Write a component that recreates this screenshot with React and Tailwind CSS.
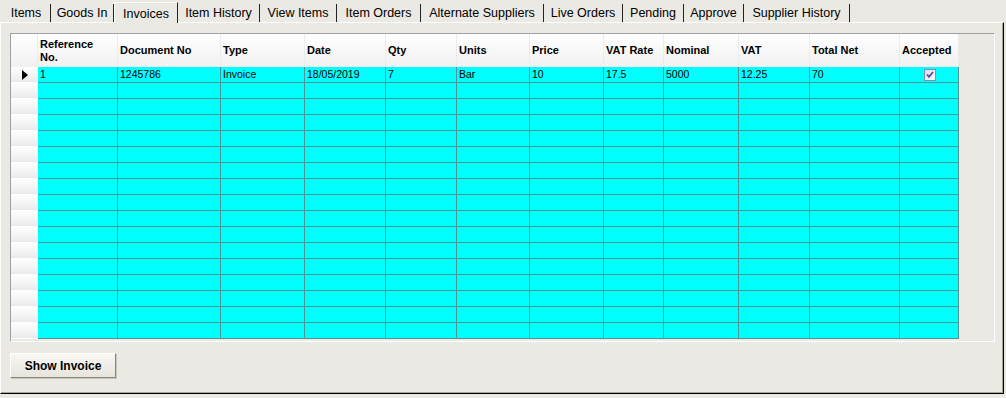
import React from 'react';

const tabs = [
    { label: 'Items', w: 'w-[49px]' },
    { label: 'Goods In', w: 'w-[63px]' },
    { label: 'Invoices', w: 'w-[64px]', active: true },
    { label: 'Item History', w: 'w-[82px]' },
    { label: 'View Items', w: 'w-[77px]' },
    { label: 'Item Orders', w: 'w-[84px]' },
    { label: 'Alternate Suppliers', w: 'w-[123px]' },
    { label: 'Live Orders', w: 'w-[79px]' },
    { label: 'Pending', w: 'w-[61px]' },
    { label: 'Approve', w: 'w-[60px]' },
    { label: 'Supplier History', w: 'w-[106px]' },
];

const columns = [
    { title: 'Reference No.', w: 'w-[80px]' },
    { title: 'Document No', w: 'w-[103px]' },
    { title: 'Type', w: 'w-[84px]' },
    { title: 'Date', w: 'w-[81px]' },
    { title: 'Qty', w: 'w-[71px]' },
    { title: 'Units', w: 'w-[73px]' },
    { title: 'Price', w: 'w-[74px]' },
    { title: 'VAT Rate', w: 'w-[60px]' },
    { title: 'Nominal', w: 'w-[75px]' },
    { title: 'VAT', w: 'w-[71px]' },
    { title: 'Total Net', w: 'w-[90px]' },
    { title: 'Accepted', w: 'w-[59px]' },
];

const firstRow = ['1', '1245786', 'Invoice', '18/05/2019', '7', 'Bar', '10', '17.5', '5000', '12.25', '70'];

const Checkbox = () => (
    <svg width="12" height="12" viewBox="0 0 12 12">
        <defs>
            <linearGradient id="cbg" x1="0" y1="0" x2="1" y2="1">
                <stop offset="0" stopColor="#d8d8e2" />
                <stop offset="1" stopColor="#ffffff" />
            </linearGradient>
        </defs>
        <rect x="0.5" y="0.5" width="11" height="11" fill="url(#cbg)" stroke="#7f8fb0" />
        <path d="M3 5.5 L5 7.8 L9 3" fill="none" stroke="#4b4fa6" strokeWidth="1.8" />
    </svg>
);

const App = () => {
    const rows = Array.from({ length: 17 }, (_, i) => i);

    return (
        <div className="w-[1006px] h-[398px] bg-[#ebe9e3] overflow-hidden" style={{ fontFamily: '"Liberation Sans", Arial, sans-serif' }}>
            {/* tab strip */}
            <div className="flex items-end h-[22px] pl-[2px] text-[12.5px] text-black">
                {tabs.map((t) =>
                    t.active ? (
                        <div key={t.label} className={`${t.w} h-[21px] flex items-start justify-center pt-[2px] border-t border-l border-white border-r border-r-[#222] bg-[#ebe9e3] relative z-10 -mb-px`}>
                            {t.label}
                        </div>
                    ) : (
                        <div key={t.label} className={`${t.w} h-[18px] flex items-center justify-center border-r border-r-[#222]`}>
                            {t.label}
                        </div>
                    )
                )}
            </div>

            {/* panel */}
            <div className="w-[1004px] h-[372px] border-t border-l border-white border-r border-r-black border-b border-b-black">
                <div className="h-full border-r border-b border-[#aca899] pl-[9px] pt-[10px]">
                    {/* grid */}
                    <div className="w-[985px] h-[309px] border-t border-l border-[#a0a0a0] border-r border-b border-r-white border-b-white">
                        {/* header */}
                        <div className="flex h-[33px]">
                            <div className="w-[27px] bg-gradient-to-b from-white to-[#f1f1f1] border-r border-[#ececec]" />
                            {columns.map((c) => (
                                <div key={c.title} className={`${c.w} flex items-center px-[2px] text-[11px] font-bold leading-[13px] bg-gradient-to-b from-white to-[#f1f1f1] border-r border-[#ececec]`}>
                                    {c.title === 'Reference No.' ? (
                                        <span>Reference<br />No.</span>
                                    ) : (
                                        c.title
                                    )}
                                </div>
                            ))}
                        </div>
                        {/* rows */}
                        {rows.map((r) => (
                            <div key={r} className="flex h-[16px]">
                                <div className="w-[27px] flex items-center pl-[11px] bg-gradient-to-b from-white to-[#eaeaea] border-b border-white">
                                    {r === 0 && (
                                        <svg width="6" height="10" viewBox="0 0 6 10">
                                            <path d="M0 0 L6 5 L0 10 Z" fill="#000" />
                                        </svg>
                                    )}
                                </div>
                                {columns.map((c, ci) => (
                                    <div key={c.title} className={`${c.w} bg-[#00ffff] border-r border-b border-[#4f9595] text-[10.5px] leading-[15px] pl-[2px] flex items-center ${ci === 11 ? 'justify-center pl-0' : ''}`}>
                                        {r === 0 && ci < 11 && firstRow[ci]}
                                        {r === 0 && ci === 11 && <Checkbox />}
                                    </div>
                                ))}
                            </div>
                        ))}
                    </div>

                    <button className="mt-[11px] w-[106px] h-[25px] text-[12px] font-bold text-black bg-gradient-to-b from-[#f8f7f3] to-[#e6e4dc] border-t border-l border-white border-r border-b border-r-[#8a877c] border-b-[#8a877c] shadow-[1px_1px_0_#c9c6bb]">
                        Show Invoice
                    </button>
                </div>
            </div>
        </div>
    );
};

export default App;
